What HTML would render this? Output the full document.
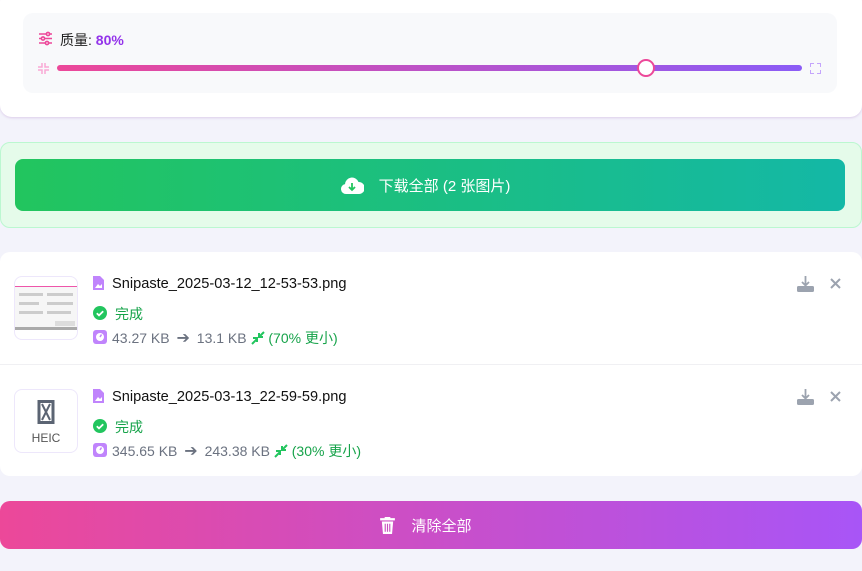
<!DOCTYPE html>
<html><head><meta charset="utf-8"><style>
*{box-sizing:border-box;margin:0;padding:0}
body{width:862px;height:571px;background:#f3f3fb;font-family:"Liberation Sans","Noto Sans CJK SC",sans-serif;position:relative;overflow:hidden}
.abs{position:absolute}
.top{left:0;top:-10px;width:862px;height:127px;background:#fff;border-radius:12px;box-shadow:0 1px 2px rgba(200,170,220,.5)}
.inner{left:23px;top:13px;width:814px;height:80px;background:#f8f9fb;border-radius:10px}
.track{left:57px;top:65px;width:745px;height:6px;border-radius:3px;background:linear-gradient(90deg,#ec4899,#8b5cf6)}
.thumb{left:637px;top:59px;width:18px;height:18px;border-radius:50%;background:#fff;border:2.5px solid #ec4899}
.green{left:0;top:142px;width:862px;height:86px;background:#e5fbea;border:1px solid #bbf7d0;border-radius:10px}
.gbtn{left:15px;top:159px;width:830px;height:52px;border-radius:8px;background:linear-gradient(90deg,#22c55e,#14b8a6);color:#fff;font-size:15px;display:flex;align-items:center;justify-content:center}
.list{left:0;top:252px;width:862px;height:224px;background:#fff;border-radius:10px}
.div{left:0;top:364px;width:862px;height:1px;background:#f0f0f3}
.thumbbox{width:64px;height:64px;border-radius:8px;border:1px solid #ede7fb;background:#fff}
.name{font-size:14.6px;color:#111}
.ok{font-size:14px;color:#16a34a}
.size{font-size:14px;color:#6b7280;white-space:nowrap}
.cbtn{left:0;top:501px;width:862px;height:48px;border-radius:10px;background:linear-gradient(90deg,#ec4899,#a855f7);color:#fff;font-size:15px;display:flex;align-items:center;justify-content:center}
</style></head><body>
<div class="abs top"></div>
<div class="abs inner"></div>
<svg class="abs" style="left:38px;top:31px" width="15" height="15" viewBox="0 0 15 15" fill="none" stroke="#ec4899" stroke-width="1.6"><path d="M1 3h13M1 7.5h13M1 12h13"/><circle cx="10" cy="3" r="1.6" fill="#fff"/><circle cx="5" cy="7.5" r="1.6" fill="#fff"/><circle cx="9" cy="12" r="1.6" fill="#fff"/></svg>
<div class="abs" style="left:60px;top:30px;font-size:14px;color:#222">质量: <b style="color:#9333ea">80%</b></div>
<svg class="abs" style="left:38px;top:63px" width="11" height="11" viewBox="0 0 11 11" fill="none" stroke="#f9a8d4" stroke-width="1.5"><path d="M4 0v4H0M7 0v4h4M4 11V7H0M7 11V7h4"/></svg>
<div class="abs track"></div>
<div class="abs thumb"></div>
<svg class="abs" style="left:810px;top:63px" width="11" height="11" viewBox="0 0 11 11" fill="none" stroke="#c4a5fc" stroke-width="2"><path d="M0 4V0h4M7 0h4v4M0 7v4h4M11 7v4H7"/></svg>

<div class="abs green"></div>
<div class="abs gbtn"><svg width="24" height="17" viewBox="0 0 24 17" style="margin-right:15px;margin-left:-10px"><path d="M6 17a5 5 0 0 1-1-9.9A7 7 0 0 1 18.5 5 6 6 0 0 1 19 17z" fill="#fff"/><path d="M12 6v7M9 10l3 3 3-3" stroke="#22c55e" stroke-width="1.8" fill="none"/></svg>下载全部 (2 张图片)</div>

<div class="abs list"></div>
<div class="abs div"></div>
<div class="abs thumbbox" style="left:14px;top:276px;overflow:hidden"><div style="margin:9px 0 0;height:44px;background:#f6f6f6;border-top:1px solid #e5a;border-bottom:3px solid #aaa;position:relative">
<div style="position:absolute;left:4px;top:6px;width:24px;height:3px;background:#ccc"></div>
<div style="position:absolute;left:4px;top:15px;width:20px;height:3px;background:#ccc"></div>
<div style="position:absolute;left:4px;top:24px;width:24px;height:3px;background:#ccc"></div>
<div style="position:absolute;left:32px;top:6px;width:26px;height:3px;background:#ccc"></div>
<div style="position:absolute;left:32px;top:15px;width:26px;height:3px;background:#ccc"></div>
<div style="position:absolute;left:32px;top:24px;width:24px;height:3px;background:#ccc"></div>
<div style="position:absolute;left:40px;top:34px;width:20px;height:5px;background:#ddd"></div></div></div>
<div class="abs thumbbox" style="left:14px;top:389px"><svg style="position:absolute;left:22px;top:10px" width="18" height="24" viewBox="0 0 18 24"><rect x="2" y="1.5" width="14" height="21" fill="none" stroke="#5b6473" stroke-width="3"/><path d="M5 4l8 16M13 4L5 20" stroke="#5b6473" stroke-width="2"/></svg><div style="position:absolute;top:41px;width:100%;text-align:center;font-size:12px;color:#555">HEIC</div></div>

<svg class="abs" style="left:93px;top:276px" width="11" height="14" viewBox="0 0 11 14"><path d="M0 0h7l4 4v10H0z" fill="#c084fc"/><path d="M2 12l3-4 2 2 2-2v4z" fill="#fff"/></svg>
<div class="abs name" style="left:112px;top:276px">Snipaste_2025-03-12_12-53-53.png</div>
<svg class="abs" style="left:93px;top:306px" width="14" height="14"><circle cx="7" cy="7" r="7" fill="#22c55e"/><path d="M3.8 7.2l2.2 2.2 4.2-4.2" stroke="#fff" stroke-width="1.8" fill="none"/></svg>
<div class="abs ok" style="left:115px;top:304px">完成</div>
<svg class="abs" style="left:93px;top:330px" width="14" height="14"><rect width="14" height="14" rx="3" fill="#c084fc"/><circle cx="7" cy="7" r="4" fill="#fff"/><path d="M7 7l1.5-2.5" stroke="#c084fc" stroke-width="1.5"/></svg>
<div class="abs size" style="left:112px;top:328px">43.27 KB <span style="font-size:16px;margin:0 3px">➔</span> 13.1 KB <svg width="14" height="14" viewBox="0 0 14 14" style="vertical-align:-2px"><path d="M1 13l5-5M2 7h4v4M13 1L8 6M8 2v4h4" stroke="#22c55e" stroke-width="2" fill="none"/></svg><span style="color:#16a34a"> (70% 更小)</span></div>

<svg class="abs" style="left:93px;top:389px" width="11" height="14" viewBox="0 0 11 14"><path d="M0 0h7l4 4v10H0z" fill="#c084fc"/><path d="M2 12l3-4 2 2 2-2v4z" fill="#fff"/></svg>
<div class="abs name" style="left:112px;top:389px">Snipaste_2025-03-13_22-59-59.png</div>
<svg class="abs" style="left:93px;top:419px" width="14" height="14"><circle cx="7" cy="7" r="7" fill="#22c55e"/><path d="M3.8 7.2l2.2 2.2 4.2-4.2" stroke="#fff" stroke-width="1.8" fill="none"/></svg>
<div class="abs ok" style="left:115px;top:417px">完成</div>
<svg class="abs" style="left:93px;top:443px" width="14" height="14"><rect width="14" height="14" rx="3" fill="#c084fc"/><circle cx="7" cy="7" r="4" fill="#fff"/><path d="M7 7l1.5-2.5" stroke="#c084fc" stroke-width="1.5"/></svg>
<div class="abs size" style="left:112px;top:441px">345.65 KB <span style="font-size:16px;margin:0 3px">➔</span> 243.38 KB <svg width="14" height="14" viewBox="0 0 14 14" style="vertical-align:-2px"><path d="M1 13l5-5M2 7h4v4M13 1L8 6M8 2v4h4" stroke="#22c55e" stroke-width="2" fill="none"/></svg><span style="color:#16a34a"> (30% 更小)</span></div>

<svg class="abs" style="left:797px;top:276px" width="17" height="16" viewBox="0 0 17 16"><path d="M8.5 0v9M5 6l3.5 3.5L12 6" stroke="#9ca3af" stroke-width="1.8" fill="none"/><rect x="0" y="10" width="17" height="6" rx="1.5" fill="#9ca3af"/></svg>
<svg class="abs" style="left:830px;top:278px" width="11" height="11"><path d="M1 1l9 9M10 1l-9 9" stroke="#9ca3af" stroke-width="2"/></svg>
<svg class="abs" style="left:797px;top:389px" width="17" height="16" viewBox="0 0 17 16"><path d="M8.5 0v9M5 6l3.5 3.5L12 6" stroke="#9ca3af" stroke-width="1.8" fill="none"/><rect x="0" y="10" width="17" height="6" rx="1.5" fill="#9ca3af"/></svg>
<svg class="abs" style="left:830px;top:391px" width="11" height="11"><path d="M1 1l9 9M10 1l-9 9" stroke="#9ca3af" stroke-width="2"/></svg>

<div class="abs cbtn"><svg width="15" height="17" viewBox="0 0 13 15" style="margin-right:16px;margin-left:-10px"><rect x="0" y="1" width="13" height="2" fill="#fff"/><rect x="4" y="0" width="5" height="2" fill="#fff"/><path d="M1.5 4h10l-1 11h-8z" fill="#fff"/><path d="M4.5 6v7M6.5 6v7M8.5 6v7" stroke="#c94fc0" stroke-width="1"/></svg>清除全部</div>
</body></html>
